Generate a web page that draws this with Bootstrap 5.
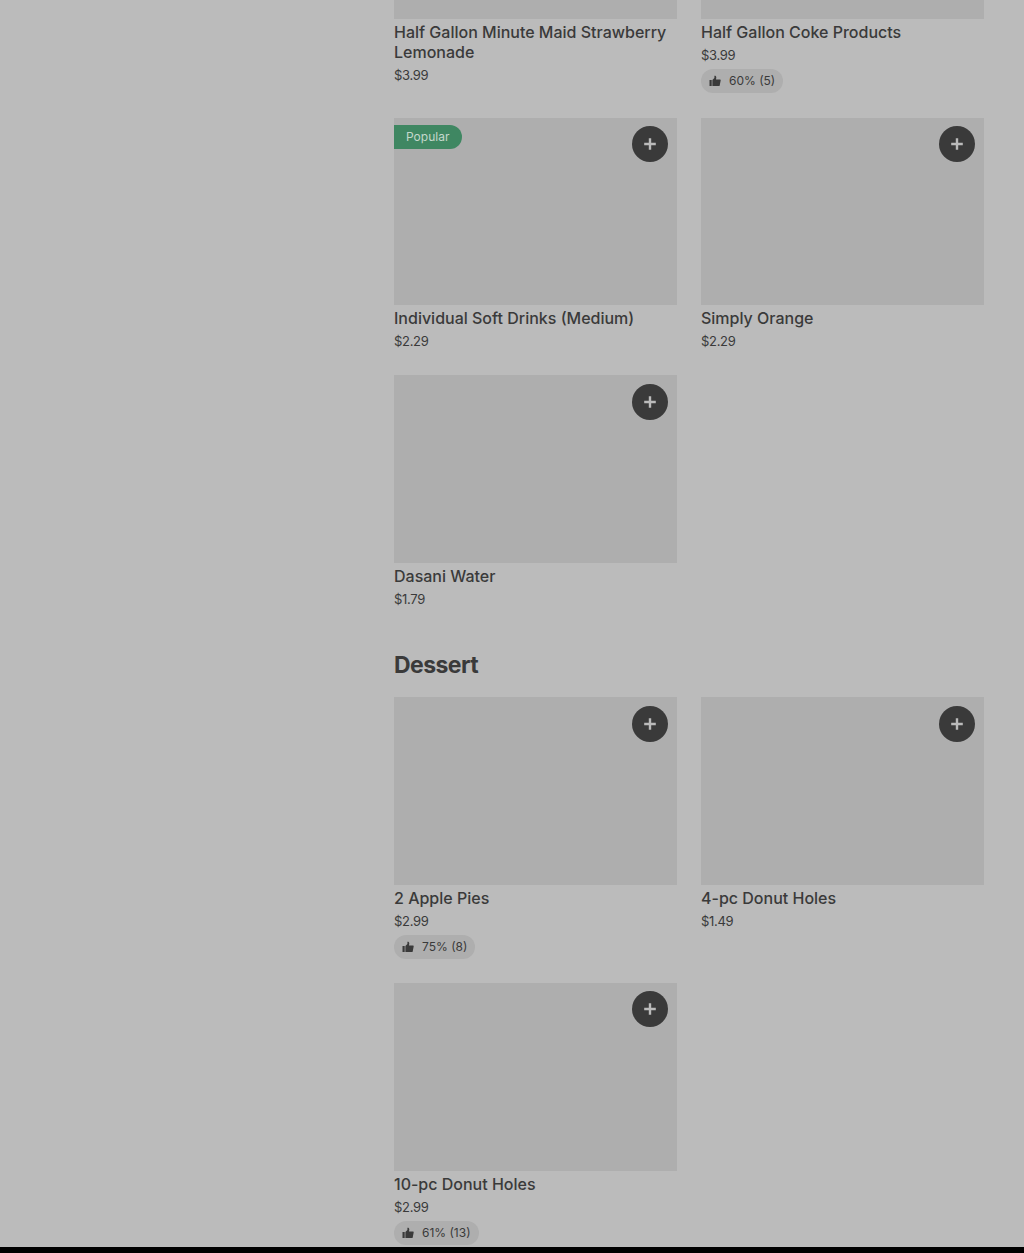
<!DOCTYPE html>
<html lang="en">
<head>
  <meta charset="UTF-8">
  <meta name="viewport" content="width=device-width, initial-scale=1.0">
  <title>Menu</title>
  <link href="https://cdn.jsdelivr.net/npm/bootstrap@5.3.0/dist/css/bootstrap.min.css" rel="stylesheet">
  <style>
    html, body {
      height: 1253px;
      overflow: hidden;
    }
    body {
      background-color: #bbbbbb;
      color: #3a3a3a;
      font-family: Inter, "Liberation Sans", sans-serif;
    }
    .page-wrap {
      height: 1247px;
      overflow: hidden;
    }
    .side-space {
      width: 394px;
    }
    .menu-col {
      width: 590px;
    }
    .item-photo {
      height: 187.67px;
      background-color: #aeaeae;
    }
    .item-photo.clipped {
      height: 19px;
    }
    .clipped-col {
      padding-bottom: 0.6px;
    }
    .add-btn {
      top: 8.6px;
      right: 9px;
      width: 36px;
      height: 36px;
      background-color: #3a3a3a;
      color: #bbbbbb;
    }
    .popular-tag {
      top: 7px;
      left: 0;
      height: 24px;
      width: 68px;
      padding-left: 12px;
      background-color: #3f8762;
      color: #c4d8cc;
      font-size: 12px;
      line-height: 24px;
      border-radius: 0 12px 12px 0;
    }
    .item-name {
      margin: 3px 0 0;
      font-size: 16px;
      font-weight: 500;
      line-height: 20px;
    }
    .item-price {
      margin: 3px 0 0;
      font-size: 13px;
      line-height: 20px;
      letter-spacing: -0.3px;
    }
    .rating-pill {
      height: 24px;
      margin-top: 4px;
      padding: 0 8px;
      background-color: #aeaeae;
      font-size: 12px;
      border-radius: 12px;
    }
    .section-title {
      margin: 40px 0 16.3px;
      height: 32px;
      font-size: 23px;
      font-weight: 700;
      line-height: 32px;
      letter-spacing: -0.55px;
      color: #3a3a3a;
    }
    .bottom-bar {
      height: 6px;
      background-color: #000;
    }
  </style>
</head>
<body>
  <div class="page-wrap d-flex">
    <div class="side-space flex-shrink-0"></div>
    <div class="menu-col" id="menu"></div>
  </div>
  <div class="bottom-bar"></div>

  <svg width="0" height="0" class="d-block position-absolute">
    <symbol id="plus" viewBox="0 0 16 16"><path d="M6.8 2.2h2.4v4.6h4.6v2.4H9.2v4.6H6.8V9.2H2.2V6.8h4.6z" fill="currentColor"/></symbol>
    <symbol id="thumb" viewBox="0 0 12 12"><path d="M0.5 5h2.2v6H0.5zM3.4 5l2-2.1V0.7c1-0.3 1.9 0.4 1.9 1.5L7 4.4h4c0.5 0 0.8 0.4 0.7 0.9l-1 5.1c-0.1 0.4-0.4 0.6-0.8 0.6H3.4z" fill="currentColor"/></symbol>
  </svg>

  <script>
    const sections = [
      { items: [
        { name: 'Half Gallon Minute Maid Strawberry Lemonade', price: '$3.99', clipped: true },
        { name: 'Half Gallon Coke Products', price: '$3.99', rating: '60% (5)', clipped: true },
        { name: 'Individual Soft Drinks (Medium)', price: '$2.29', popular: true },
        { name: 'Simply Orange', price: '$2.29' },
        { name: 'Dasani Water', price: '$1.79' }
      ]},
      { title: 'Dessert', items: [
        { name: '2 Apple Pies', price: '$2.99', rating: '75% (8)' },
        { name: '4-pc Donut Holes', price: '$1.49' },
        { name: '10-pc Donut Holes', price: '$2.99', rating: '61% (13)' }
      ]}
    ];

    function itemCard(item) {
      const tag = item.popular ? '<div class="popular-tag position-absolute">Popular</div>' : '';
      const btn = item.clipped ? '' :
        '<button class="add-btn btn p-0 border-0 rounded-circle position-absolute d-flex align-items-center justify-content-center" aria-label="Add"><svg width="16" height="16"><use href="#plus"/></svg></button>';
      const rating = item.rating ?
        `<div class="rating-pill d-inline-flex align-items-center gap-2"><svg width="12" height="12"><use href="#thumb"/></svg><span>${item.rating}</span></div>` : '';
      return `<div class="col-6 ${item.clipped ? 'clipped-col' : ''}">
        <div class="item-photo position-relative ${item.clipped ? 'clipped' : ''}">${tag}${btn}</div>
        <h3 class="item-name">${item.name}</h3>
        <p class="item-price">${item.price}</p>
        ${rating}
      </div>`;
    }

    document.getElementById('menu').innerHTML = sections.map(s => `
      ${s.title ? `<h2 class="section-title">${s.title}</h2>` : ''}
      <div class="row g-4">${s.items.map(itemCard).join('')}</div>
    `).join('');
  </script>
  <script src="https://cdn.jsdelivr.net/npm/bootstrap@5.3.0/dist/js/bootstrap.bundle.min.js"></script>
</body>
</html>
